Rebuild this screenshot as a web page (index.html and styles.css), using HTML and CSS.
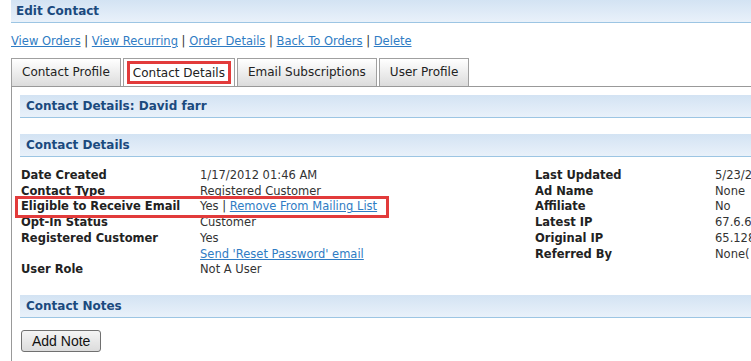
FILE: index.html
```html
<!DOCTYPE html>
<html lang="en">
<head>
  <meta charset="UTF-8" />
  <title>Edit Contact</title>
  <link rel="stylesheet" href="styles.css">
</head>
<body>
  <div class="page">
    <h1 class="page-title">Edit Contact</h1>

    <div class="links">
      <a href="#">View Orders</a> | <a href="#">View Recurring</a> | <a href="#">Order Details</a> | <a href="#">Back To Orders</a> | <a href="#">Delete</a>
    </div>

    <div class="tabs">
      <div class="tab">Contact Profile</div>
      <div class="tab active"><span class="mark">Contact Details</span></div>
      <div class="tab">Email Subscriptions</div>
      <div class="tab">User Profile</div>
    </div>

    <div class="panel">
      <h2 class="section-head">Contact Details: David farr</h2>

      <h2 class="section-head">Contact Details</h2>
      <div class="details">
        <div class="col">
          <div class="row"><span class="label">Date Created</span><span class="value">1/17/2012 01:46 AM</span></div>
          <div class="row"><span class="label">Contact Type</span><span class="value">Registered Customer</span></div>
          <div class="row marked"><span class="label">Eligible to Receive Email</span><span class="value">Yes | <a href="#">Remove From Mailing List</a></span></div>
          <div class="row"><span class="label">Opt-In Status</span><span class="value">Customer</span></div>
          <div class="row"><span class="label">Registered Customer</span><span class="value">Yes<br><a href="#">Send 'Reset Password' email</a></span></div>
          <div class="row"><span class="label">User Role</span><span class="value">Not A User</span></div>
        </div>
        <div class="col right">
          <div class="row"><span class="label">Last Updated</span><span class="value">5/23/2</span></div>
          <div class="row"><span class="label">Ad Name</span><span class="value">None</span></div>
          <div class="row"><span class="label">Affiliate</span><span class="value">No</span></div>
          <div class="row"><span class="label">Latest IP</span><span class="value">67.6.6</span></div>
          <div class="row"><span class="label">Original IP</span><span class="value">65.128</span></div>
          <div class="row"><span class="label">Referred By</span><span class="value">None(</span></div>
        </div>
      </div>

      <h2 class="section-head notes">Contact Notes</h2>
      <button class="btn">Add Note</button>
    </div>
  </div>
</body>
</html>
```

FILE: styles.css
```css
* {
  margin: 0;
  padding: 0;
  box-sizing: border-box;
}

html, body {
  overflow: hidden;
}

body {
  background: #fff;
  font-family: 'DejaVu Sans', Verdana, sans-serif;
  font-size: 11.5px;
  color: #333;
}

.page {
  padding-left: 11px;
  width: 751px;
}

.page-title {
  height: 23px;
  padding-left: 5px;
  line-height: 22px;
  font-size: 12px;
  font-weight: bold;
  color: #1b4a7e;
  background: linear-gradient(#d3e3f3, #e9f1fa);
  border-bottom: 1px solid #9cc5e3;
}

.links {
  margin-top: 11px;
  height: 24px;
  font-size: 11.5px;
  color: #333;
}

.links a,
.value a {
  color: #2f7cc4;
}

.tabs {
  display: flex;
  gap: 2px;
  height: 28px;
}

.tab {
  height: 28px;
  padding: 6px 10px 0;
  border: 1px solid #a0a0a0;
  border-bottom: none;
  background: linear-gradient(#ffffff, #dcdcdc);
  font-size: 12px;
  color: #222;
}

.tab.active {
  background: #fff;
  padding: 2px 3px 0;
}

.mark {
  display: inline-block;
  border: 3px solid #e23b3b;
  padding: 0 3px;
  height: 23px;
  line-height: 18px;
}

.panel {
  border-top: 1px solid #999;
  border-left: 1px solid #999;
  padding: 8px 0 0 8px;
  height: 300px;
}

.section-head {
  height: 23px;
  padding-left: 6px;
  line-height: 22px;
  font-size: 12px;
  font-weight: bold;
  color: #1b4a7e;
  background: linear-gradient(#d3e3f3, #e9f1fa);
  border-bottom: 1px solid #9cc5e3;
  margin-bottom: 16px;
}

.details {
  display: flex;
  padding-left: 1px;
  margin-top: -5px;
}

.col {
  width: 514px;
  flex-shrink: 0;
}

.col.right {
  width: 220px;
}

.row {
  display: flex;
  line-height: 15.7px;
  white-space: nowrap;
}

.label {
  width: 179px;
  font-weight: bold;
  color: #222;
  flex-shrink: 0;
}

.col.right .label {
  width: 180px;
}

.value {
  color: #333;
}

.row.marked {
  outline: 3px solid #e23b3b;
  width: 368px;
  margin-left: -3px;
  padding-left: 3px;
}

.section-head.notes {
  margin-top: 17px;
  margin-bottom: 12px;
}

.btn {
  margin-left: 1px;
  padding: 2px 10px;
  height: 22px;
  font-family: 'Liberation Sans', Arial, sans-serif;
  font-size: 14px;
  color: #111;
  border: 1px solid #707070;
  border-radius: 3px;
  background: linear-gradient(#f4f4f4, #dcdcdc);
}
```
